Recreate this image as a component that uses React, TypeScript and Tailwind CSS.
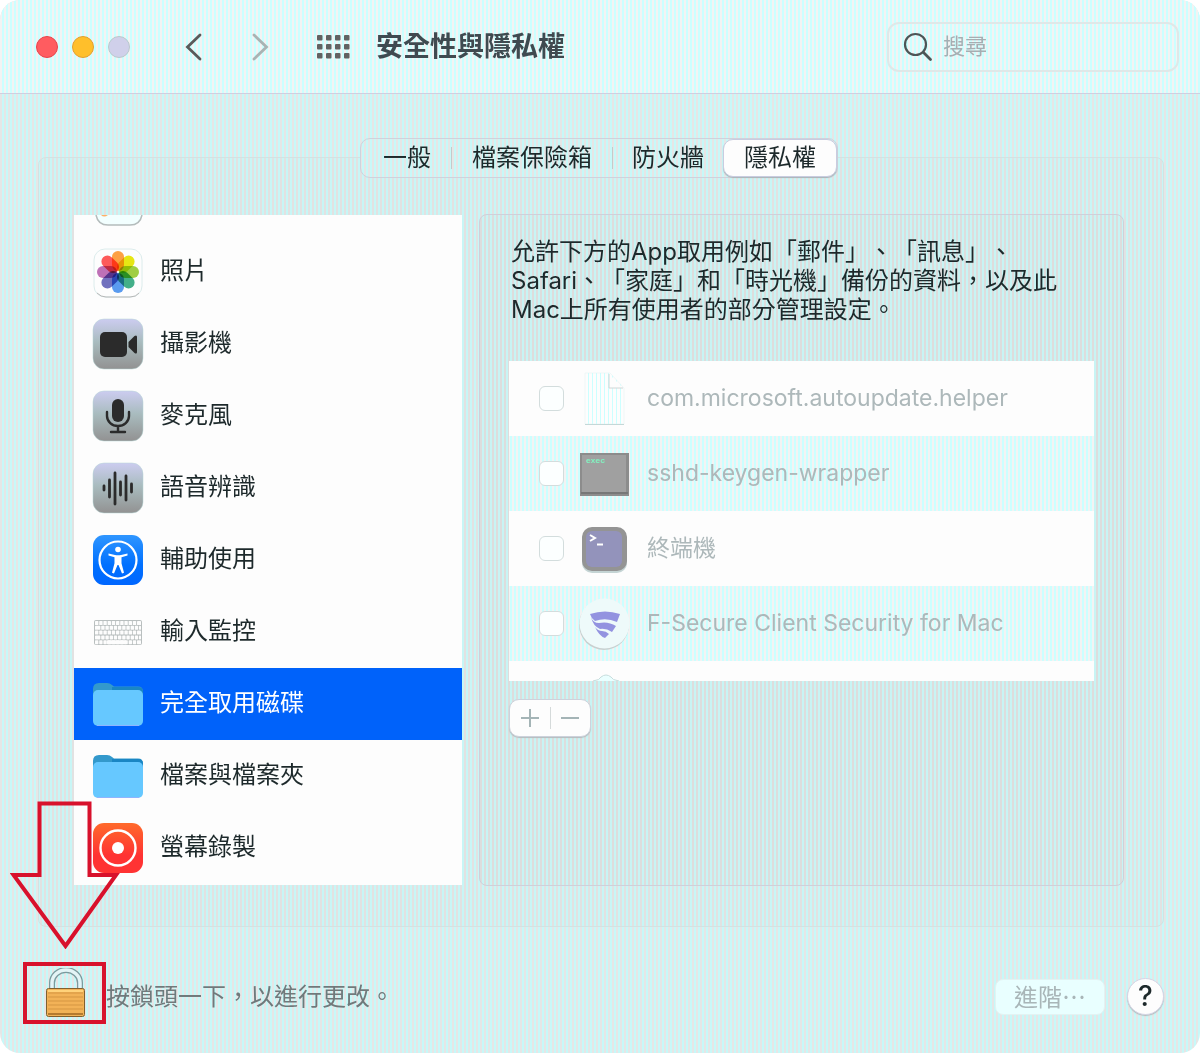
import React from "react";

const STRIPES = {
  toolbar:
    "bg-fixed bg-[repeating-linear-gradient(90deg,#f3f3f3_0px,#f3f3f3_2px,#ccffff_2px,#ccffff_4px)]",
  window:
    "bg-fixed bg-[repeating-linear-gradient(90deg,#e6e6e6_0px,#e6e6e6_2px,#c8f8f8_2px,#c8f8f8_4px)]",
  group:
    "bg-fixed bg-[repeating-linear-gradient(90deg,#e2e2e2_0px,#e2e2e2_2px,#c8f6f6_2px,#c8f6f6_4px)]",
  panel:
    "bg-fixed bg-[repeating-linear-gradient(90deg,#dddddd_0px,#dddddd_2px,#c8f4f4_2px,#c8f4f4_4px)]",
};

const PETALS = ["#ff9933", "#e6e600", "#99cc33", "#33aa80", "#4d94f0", "#6666bb", "#bb66b3", "#ff4d4d"];

function PhotosIcon() {
  return (
    <svg viewBox="0 0 52 52" className="h-13 w-13">
      <rect x="2" y="3" width="48" height="48" rx="11" fill="#fdfdfd" stroke="#dcecec" />
      <path d="M5 47q4 4 9 4h24q6 0 9-4" fill="none" stroke="#b8b8b8" />
      {PETALS.map((color, i) => (
        <rect
          key={color}
          className="mix-blend-multiply"
          x="20"
          y="5"
          width="12"
          height="20"
          rx="6"
          fill={color}
          fillOpacity="0.92"
          transform={`rotate(${i * 45} 26 26)`}
        />
      ))}
    </svg>
  );
}

function GrayTile({ id, children }: { id: string; children: React.ReactNode }) {
  return (
    <svg viewBox="0 0 52 52" className="h-13 w-13">
      <defs>
        <linearGradient id={id} x1="0" y1="0" x2="0" y2="1">
          <stop offset="0" stopColor="#ccccf0" />
          <stop offset="0.45" stopColor="#a9bcbf" />
          <stop offset="1" stopColor="#929292" />
        </linearGradient>
      </defs>
      <rect x="1" y="1" width="50" height="50" rx="11" fill={`url(#${id})`} stroke="#b5d4d4" strokeWidth="0.5" />
      {children}
    </svg>
  );
}

function CameraIcon() {
  return (
    <GrayTile id="tile-camera">
      <rect x="8" y="14" width="27" height="25" rx="5" fill="#2b2b2b" />
      <path d="M36.500 24l6-6q2.500-1.500 2.500 1v15q0 2.500-2.500 1l-6-6z" fill="#2b2b2b" />
    </GrayTile>
  );
}

function MicIcon() {
  return (
    <GrayTile id="tile-mic">
      <rect x="20" y="9" width="12" height="23" rx="6" fill="#2b2b2b" />
      <path d="M15 22v4a11 10 0 0 0 22 0v-4M26 36v6M19 42h14" fill="none" stroke="#2b2b2b" strokeWidth="2.4" strokeLinecap="round" />
    </GrayTile>
  );
}

function SpeechIcon() {
  return (
    <GrayTile id="tile-speech">
      <path
        d="M12 24v4M17.500 18v17M23 11v31M28.500 20v13M34 14v24M39.500 22v8"
        fill="none"
        stroke="#2b2b2b"
        strokeWidth="2.800"
        strokeLinecap="round"
      />
    </GrayTile>
  );
}

function AccessibilityIcon() {
  return (
    <svg viewBox="0 0 52 52" className="h-13 w-13">
      <defs>
        <linearGradient id="tile-access" x1="0" y1="0" x2="0" y2="1">
          <stop offset="0" stopColor="#2f96ff" />
          <stop offset="0.6" stopColor="#0070ff" />
          <stop offset="1" stopColor="#0066ff" />
        </linearGradient>
      </defs>
      <rect x="1" y="1" width="50" height="50" rx="11" fill="url(#tile-access)" />
      <circle cx="26" cy="26" r="18.500" fill="none" stroke="#fff" strokeWidth="2.200" />
      <circle cx="26" cy="15.500" r="2.800" fill="#fff" />
      <path
        d="M16.500 19.500l6.500 1.500q3 .5 6 0l6.500-1.500v2l-6 1.800v6l2.500 9.500-2 .7-3.500-8.500h-1l-3.500 8.500-2-.7 2.500-9.500v-6l-6-1.800z"
        fill="#fff"
      />
    </svg>
  );
}

function KeyboardIcon() {
  return (
    <svg viewBox="0 0 52 52" className="h-13 w-13">
      <rect x="2" y="14" width="48" height="25" rx="2" fill="#b9bfbf" />
      {[0, 1, 2, 3, 4].map((row) =>
        Array.from({ length: 11 }, (_, col) => {
          const shift = (row % 2) * 2;
          return (
            <rect key={`${row}-${col}`} x={3 + col * 4.2 + (col ? shift : 0)} y={15 + row * 4.8} width={col === 0 ? 3.4 + shift : col === 10 ? 4 - shift : 3.4} height="4" rx="0.600" fill="#fdfdfd" />
          );
        }),
      )}
      <rect x="15" y="34.200" width="19" height="4" rx="0.600" fill="#fdfdfd" />
    </svg>
  );
}

function FolderIcon() {
  return (
    <svg viewBox="0 0 52 52" className="h-13 w-13">
      <path d="M1 11q0-6 6-6h8q3 0 5 2l2 1.500h24q5 0 5 5v9H1z" fill="#3399cc" />
      <path d="M20 9h26q5 0 5 5v5H1v-3q12-4 19-3z" fill="#1a86c4" />
      <rect x="1" y="12" width="50" height="36" rx="5" fill="#66c8ff" />
      <path d="M5 47.500h42" stroke="#8fb4ff" />
    </svg>
  );
}

function RecordIcon() {
  return (
    <svg viewBox="0 0 52 52" className="h-13 w-13">
      <defs>
        <linearGradient id="tile-record" x1="0" y1="0" x2="0" y2="1">
          <stop offset="0" stopColor="#ff6a2b" />
          <stop offset="0.65" stopColor="#ff3333" />
        </linearGradient>
      </defs>
      <rect x="1" y="1" width="50" height="50" rx="11" fill="url(#tile-record)" />
      <circle cx="26" cy="26" r="17.500" fill="none" stroke="#fff" strokeWidth="2.400" />
      <circle cx="26" cy="26" r="6" fill="#fff" />
    </svg>
  );
}

function DocumentIcon() {
  return (
    <svg viewBox="0 0 52 54" className="h-[54px] w-13">
      <defs>
        <pattern id="paper-lines" width="4" height="4" patternUnits="userSpaceOnUse">
          <path d="M2.500 0v4" stroke="#ccffff" />
        </pattern>
      </defs>
      <path d="M7 1h25l14 15v36H7z" fill="#fdfdfd" />
      <path d="M7 1h25l14 15v36H7z" fill="url(#paper-lines)" stroke="#e0f0f0" strokeWidth="0.500" />
      <path d="M31 2v14h14" fill="#fdfdfd" stroke="#cfd6d6" />
      <path d="M7 52.500h39" stroke="#c4d8d8" />
    </svg>
  );
}

function ExecIcon() {
  return (
    <svg viewBox="0 0 52 52" className="h-13 w-13">
      <rect x="2" y="5" width="49" height="43" fill="#8c8c8c" />
      <rect x="4" y="7" width="44" height="37" fill="#a0a0a0" />
      <path d="M3 45h47" stroke="#777" strokeWidth="2" />
      <text x="8" y="15" fontSize="8" fontWeight="bold" fontFamily="Liberation Mono" fill="#80f0c0">
        exec
      </text>
    </svg>
  );
}

function TerminalIcon() {
  return (
    <svg viewBox="0 0 52 52" className="h-13 w-13">
      <rect x="4" y="6" width="45" height="44" rx="10" fill="#c4d4d4" />
      <rect x="4" y="4" width="45" height="44" rx="10" fill="#949494" />
      <rect x="8" y="8" width="36" height="36" rx="6" fill="#9393bb" />
      <path d="M12 12l5 3-5 3M19 21.500h6" fill="none" stroke="#fff" strokeWidth="2" />
    </svg>
  );
}

function FSecureIcon() {
  return (
    <svg viewBox="0 0 52 54" className="h-[54px] w-13">
      <circle cx="26" cy="28" r="25" fill="#c8d0d0" />
      <circle cx="26.500" cy="26.500" r="25" fill="#eefafa" />
      <g fill="#9393e0">
        <path d="M12 17Q27 12 42 17L39 25Q28 20 17 24Q13 21 12 17z" />
        <path d="M13 20Q15 26 21 26Q30 24 38 29L34 35Q28 31 22 32Q15 29 13 20z" />
        <path d="M17 30Q20 34 24 34Q28 34 31 37L27 41Q21 39 17 30z" />
      </g>
    </svg>
  );
}

function LockIcon() {
  return (
    <svg viewBox="0 0 42 50" className="h-[50px] w-[42px]">
      <path d="M7 24V15a14 13 0 0 1 28 0v9" fill="none" stroke="#7b9a9e" strokeWidth="6" />
      <path d="M7 24V15a14 13 0 0 1 28 0v9" fill="none" stroke="#e4f4f6" strokeWidth="3.500" />
      <rect x="1.500" y="20.500" width="38" height="28" rx="2" fill="#f2b257" stroke="#80602f" />
      <path d="M3 25h35M3 29h35M3 33h35M3 37h35M3 41h35" stroke="#d59643" />
      <path d="M3 23h35" stroke="#ffd27a" strokeWidth="2" />
      <path d="M3 46h35" stroke="#b47a30" strokeWidth="2" />
    </svg>
  );
}

const CATEGORIES = [
  { label: "照片", Icon: PhotosIcon },
  { label: "攝影機", Icon: CameraIcon },
  { label: "麥克風", Icon: MicIcon },
  { label: "語音辨識", Icon: SpeechIcon },
  { label: "輔助使用", Icon: AccessibilityIcon },
  { label: "輸入監控", Icon: KeyboardIcon },
  { label: "完全取用磁碟", Icon: FolderIcon, selected: true },
  { label: "檔案與檔案夾", Icon: FolderIcon },
  { label: "螢幕錄製", Icon: RecordIcon },
];

const APPS = [
  { name: "com.microsoft.autoupdate.helper", Icon: DocumentIcon },
  { name: "sshd-keygen-wrapper", Icon: ExecIcon },
  { name: "終端機", Icon: TerminalIcon },
  { name: "F-Secure Client Security for Mac", Icon: FSecureIcon },
];

function Toolbar() {
  return (
    <header className={`flex h-[94px] items-center border-b border-[#cfcfe0] pr-[21px] pl-9 ${STRIPES.toolbar}`}>
      <div className="flex gap-3.5">
        <button aria-label="關閉" className="size-[22px] rounded-full border border-[#e8434b] bg-[#ff5c60]" />
        <button aria-label="最小化" className="size-[22px] rounded-full border border-[#e0a030] bg-[#ffbf2b]" />
        <button aria-label="縮放" className="size-[22px] rounded-full border border-[#b9c9cc] bg-[#d0d0ea]" />
      </div>
      <button aria-label="返回" className="ml-[55px]">
        <svg viewBox="0 0 18 28" className="h-7 w-[18px]" fill="none" stroke="#5a5a5a" strokeWidth="2.800" strokeLinecap="round">
          <path d="M15 2L2.500 14 15 26" />
        </svg>
      </button>
      <button aria-label="前進" className="ml-12" disabled>
        <svg viewBox="0 0 18 28" className="h-7 w-[18px]" fill="none" stroke="#a9b3b3" strokeWidth="2.800" strokeLinecap="round">
          <path d="M3 2l12.500 12L3 26" />
        </svg>
      </button>
      <button aria-label="顯示全部" className="ml-12">
        <svg viewBox="0 0 33 24" className="h-6 w-[33px]" fill="#626262">
          {[0, 1, 2].map((r) =>
            [0, 1, 2, 3].map((c) => <rect key={`${r}${c}`} x={c * 9} y={r * 9} width="5.500" height="5.500" rx="1" />),
          )}
        </svg>
      </button>
      <h1 className="ml-[26px] text-[27px] leading-9 font-bold text-[#3f4a50]">安全性與隱私權</h1>
      <label className="ml-auto flex h-[50px] w-[292px] items-center rounded-xl border-2 border-[#dfe8e8] pl-3.5">
        <svg viewBox="0 0 30 30" className="size-[30px] shrink-0" fill="none" stroke="#4d5556" strokeLinecap="round">
          <circle cx="12.500" cy="12.500" r="10.500" strokeWidth="2.200" />
          <path d="M20.500 20.500l7 7" strokeWidth="2.800" />
        </svg>
        <input
          type="search"
          aria-label="搜尋"
          placeholder="搜尋"
          className="ml-2.5 w-full min-w-0 bg-transparent text-[22px] outline-none placeholder:text-[#a6aeb2]"
        />
      </label>
    </header>
  );
}

function Tabs() {
  return (
    <div role="tablist" className={`mx-auto -mt-5 flex h-10 w-fit items-center rounded-[10px] border border-[#cfd2dc] text-2xl ${STRIPES.window}`}>
      <button role="tab" className="pr-5 pl-[22px]">一般</button>
      <span className="h-[22px] w-px bg-[#c4caca]" />
      <button role="tab" className="px-5">檔案保險箱</button>
      <span className="h-[22px] w-px bg-[#c4caca]" />
      <button role="tab" className="px-[19px]">防火牆</button>
      <button
        role="tab"
        aria-selected="true"
        className="h-[38px] rounded-[10px] border border-[#c9cce0] bg-[#fdfdfd] px-5 leading-8 shadow-[0_1px_1px_#a9b5b8]"
      >
        隱私權
      </button>
    </div>
  );
}

function Sidebar() {
  return (
    <nav className="my-px w-[388px] shrink-0 overflow-hidden bg-[#fdfdfd] pb-px">
      <div className="h-[21px] pl-[21px]">
        <svg viewBox="0 0 48 12" className="h-3 w-12">
          <path d="M1 0q2 10 12 10h22q10 0 12-10" fill="#f2ffff" stroke="#b4bcbc" strokeWidth="1.500" />
          <path d="M6 0q3 3 7 0z" fill="#ffb066" />
        </svg>
      </div>
      <ul>
        {CATEGORIES.map(({ label, Icon, selected }) => (
          <li key={label}>
            <button
              className={
                selected
                  ? "flex h-[72px] w-full items-center gap-4 bg-[#0062fa] pl-[18px] text-left text-2xl text-white"
                  : "flex h-[72px] w-full items-center gap-4 pl-[18px] text-left text-2xl"
              }
            >
              <Icon />
              <span className="pb-0.5">{label}</span>
            </button>
          </li>
        ))}
      </ul>
    </nav>
  );
}

function AccessPanel() {
  return (
    <div className={`min-w-0 flex-1 rounded-lg border border-[#cfd0da] px-[29px] pt-[22px] ${STRIPES.panel}`}>
      <p className="pl-0.5 text-2xl leading-[29px] whitespace-nowrap [text-spacing-trim:space-all]">
        允許下方的App取用例如「郵件」、「訊息」、
        <br />
        Safari、「家庭」和「時光機」備份的資料，以及此
        <br />
        Mac上所有使用者的部分管理設定。
      </p>
      <ul className="mt-[37px] h-80 overflow-hidden bg-[#fdfdfd] text-[#adb8ba]">
        {APPS.map(({ name, Icon }, i) => (
          <li key={name} className={i % 2 ? STRIPES.toolbar : "bg-[#fdfdfd]"}>
            <label className="flex h-[75px] items-center pl-[30px]">
              <input type="checkbox" disabled className="size-[25px] shrink-0 appearance-none rounded-md border border-[#d3dddd] bg-[#fcffff]" />
              <span className="ml-3.5 shrink-0">
                <Icon />
              </span>
              <span className="ml-[17px] text-[23px] whitespace-nowrap">{name}</span>
            </label>
          </li>
        ))}
        <li className="flex pt-3 pl-[84px]">
          <svg viewBox="0 0 26 8" className="h-2 w-[26px]">
            <path d="M0 8q7-1 8-4 5-4 10 0 1 3 8 4" fill="#eaffff" stroke="#c6dcdc" />
          </svg>
        </li>
      </ul>
      <div className="mt-[18px] flex h-[38px] w-[82px] items-center rounded-[10px] border border-[#cdd2dc] bg-[#fdfdfd] shadow-[0_1px_1px_#b4bcbe]">
        <button aria-label="加入" disabled className="flex flex-1 justify-center">
          <svg viewBox="0 0 20 20" className="size-5" stroke="#a4b4b6" strokeWidth="2">
            <path d="M1 10h18M10 1v18" />
          </svg>
        </button>
        <span className="h-[22px] w-px bg-[#d5dada]" />
        <button aria-label="移除" disabled className="flex flex-1 justify-center">
          <svg viewBox="0 0 20 20" className="size-5" stroke="#a4b4b6" strokeWidth="2">
            <path d="M1 10h18" />
          </svg>
        </button>
      </div>
    </div>
  );
}

function Footer() {
  return (
    <footer className="flex items-center pt-[35px] pr-9 pb-[29px] pl-[23px]">
      <div className="relative">
        <button aria-label="鎖頭" className="flex h-[62px] w-[83px] items-center justify-center border-4 border-[#d8112c] pl-0.5">
          <LockIcon />
        </button>
        <svg
          viewBox="0 0 110 150"
          className="pointer-events-none absolute -left-[13px] bottom-[75px] h-[150px] w-[110px] max-w-none"
          fill="none"
          stroke="#d8112c"
          strokeWidth="4"
        >
          <path d="M29.500 4.500h50V76H106L55.500 147 3.500 76h26z" />
        </svg>
      </div>
      <p className="mt-2 text-2xl text-[#70797b]">按鎖頭一下，以進行更改。</p>
      <button disabled className="mt-2 ml-auto h-9 rounded-lg border border-[#e2f3f3] bg-[#e9ffff] px-[18px] text-2xl leading-8 text-[#a9b6b8]">
        進階<span className="font-['Noto_Sans_CJK_TC',sans-serif]">⋯</span>
      </button>
      <button
        aria-label="輔助說明"
        className="mt-1.5 ml-[22px] size-[37px] rounded-full border border-[#d5d5e6] bg-[#fdfdfd] text-[28px] leading-8 font-medium shadow-[0_1px_1px_#b4bcbe]"
      >
        ?
      </button>
    </footer>
  );
}

export default function App() {
  return (
    <div className="bg-white" lang="zh-Hant">
      <div className={`overflow-hidden rounded-[20px] font-[Inter,'Noto_Sans_CJK_TC',sans-serif] text-[#1d292b] ${STRIPES.window}`}>
        <Toolbar />
        <main className="pt-[63px] pr-9 pl-[38px]">
          <section className={`rounded-lg border border-[#d3e2e2] pr-[39px] pb-10 pl-[35px] ${STRIPES.group}`}>
            <Tabs />
            <div className="mt-9 flex gap-[17px]">
              <Sidebar />
              <AccessPanel />
            </div>
          </section>
        </main>
        <Footer />
      </div>
    </div>
  );
}
